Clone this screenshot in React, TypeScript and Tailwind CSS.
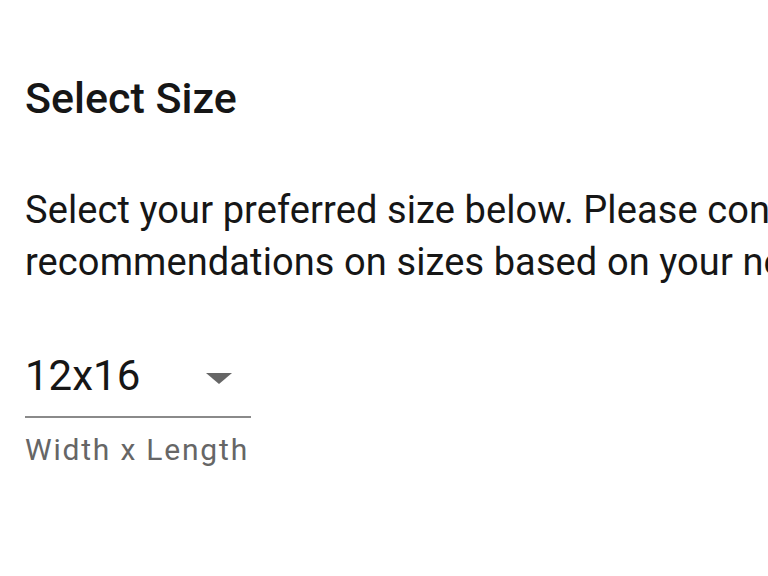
export default function App() {
  return (
    <div className="w-[768px] h-[576px] overflow-hidden bg-white" style={{ fontFamily: 'Roboto, "Liberation Sans", sans-serif' }}>
      <div className="pl-[25px] pt-[64px]">
        <h2 className="text-[43px] leading-[69px] font-medium text-[#161616] whitespace-nowrap">Select Size</h2>
        <p className="mt-[51px] text-[38px] leading-[52px] tracking-[0.1px] text-[#161616] whitespace-nowrap">
          Select your preferred size below. Please consult our team for
          <br />
          recommendations on sizes based on your needs.
        </p>
        <div className="mt-[60px] w-[226px]">
          <div className="h-[70px] flex items-center justify-between border-b-2 border-[#8a8a8a]">
            <span className="text-[42px] text-[#161616] pb-[14px]">12x16</span>
            <svg width="26" height="14" viewBox="0 0 26 14" className="mr-[19px] mb-[8px]">
              <polygon points="0,2 26,2 13,13" fill="#666" />
            </svg>
          </div>
          <div className="mt-[12px] text-[30px] leading-[40px] tracking-[1.8px] text-[#666] whitespace-nowrap">Width x Length</div>
        </div>
      </div>
    </div>
  );
}
